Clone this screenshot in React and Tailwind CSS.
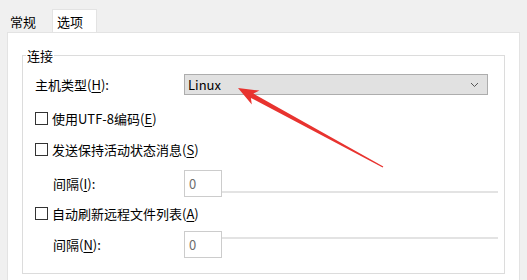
const font = { fontFamily: '"Noto Sans CJK SC", "Noto Sans", sans-serif' };

function Checkbox({ label, keyChar }) {
  return (
    <div className="flex items-center h-[20px]">
      <span className="w-[13px] h-[13px] border border-[#333333] bg-white" />
      <span className="ml-[4px]">
        {label}(<span className="underline underline-offset-2">{keyChar}</span>)
      </span>
    </div>
  );
}

function IntervalRow({ label, keyChar, lineTop }) {
  return (
    <div className="flex items-start h-[27px]">
      <div className="w-[131px] ml-[18px] h-full flex items-center">
        {label}(<span className="underline underline-offset-2">{keyChar}</span>):
      </div>
      <div className="w-[38px] h-full border border-[#cccccc] pl-[4px] text-[#6d6d6d] flex items-center bg-white">
        0
      </div>
      <div className={`w-[276px] h-[2px] bg-[#e3e3e3] ${lineTop}`} />
    </div>
  );
}

export default function App() {
  return (
    <div
      className="relative w-[527px] h-[280px] overflow-hidden bg-[#f0f0f0] text-[13px] text-black leading-none"
      style={font}
    >
      {/* tabs */}
      <div className="flex items-end h-[32px] pl-[7px]">
        <div className="h-[22px] px-[3px] flex items-center w-[45px]">常规</div>
        <div className="h-[23px] w-[45px] bg-white border-t border-x border-[#e3e3e3] flex items-center pl-[4px]">
          选项
        </div>
      </div>

      {/* panel */}
      <div className="mx-[7px] h-[260px] bg-white border border-[#e3e3e3] px-[14px] pt-[22px]">
        <div className="border border-[#dcdcdc] h-[219px] pl-[12px]">
          <div className="-mt-[9px] -ml-[9px] w-fit px-[1px] bg-white leading-[17px]">连接</div>

          <div className="mt-[10px] flex items-center h-[21px]">
            <div className="w-[149px]">
              主机类型(<span className="underline underline-offset-2">H</span>):
            </div>
            <div className="w-[304px] h-full bg-[#e1e1e1] border border-[#adadad] flex items-center justify-between pl-[3px] pr-[8px]">
              <span>Linux</span>
              <svg width="9" height="6" viewBox="0 0 9 6" fill="none">
                <path d="M1 1 L4.5 4.5 L8 1" stroke="#555555" strokeWidth="1" />
              </svg>
            </div>
          </div>

          <div className="mt-[13px]">
            <Checkbox label="使用UTF-8编码" keyChar="E" />
          </div>
          <div className="mt-[11px]">
            <Checkbox label="发送保持活动状态消息" keyChar="S" />
          </div>
          <div className="mt-[11px]">
            <IntervalRow label="间隔" keyChar="I" lineTop="mt-[21px]" />
          </div>
          <div className="mt-[6px]">
            <Checkbox label="自动刷新远程文件列表" keyChar="A" />
          </div>
          <div className="mt-[8px]">
            <IntervalRow label="间隔" keyChar="N" lineTop="mt-[6px]" />
          </div>
        </div>
      </div>

      {/* red annotation arrow */}
      <svg className="absolute left-0 top-0" width="527" height="280" viewBox="0 0 527 280">
        <polygon
          points="238,88 259.4,90.6 253.3,93.5 383.3,166.6 382.7,167.4 250.9,97.9 251.8,104.6"
          fill="#e8332f"
        />
      </svg>
    </div>
  );
}
